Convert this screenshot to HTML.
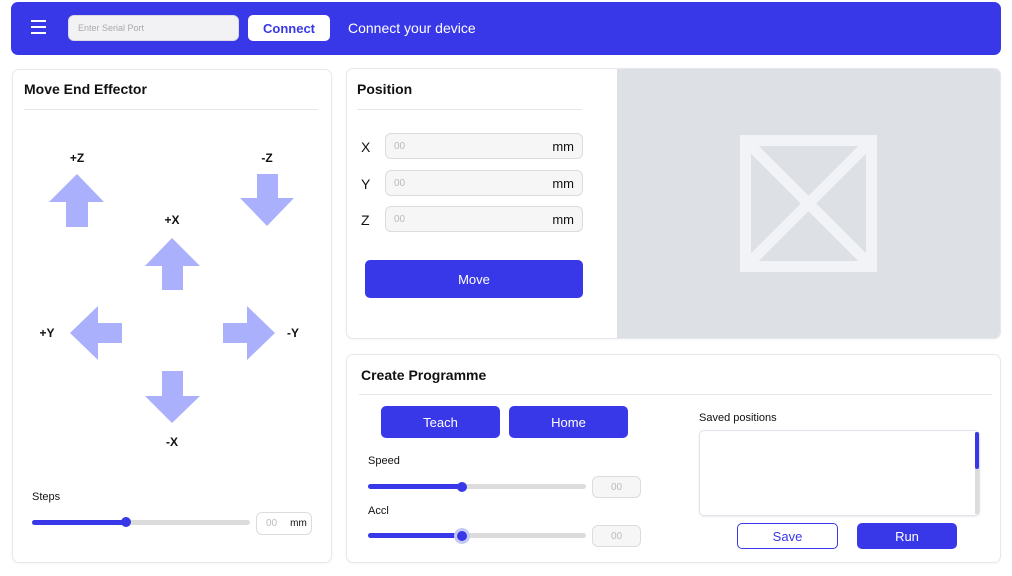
<!DOCTYPE html>
<html><head><meta charset="utf-8"><style>
*{box-sizing:border-box;margin:0;padding:0}
body{width:1012px;height:576px;background:#fff;font-family:"Liberation Sans",sans-serif;position:relative;overflow:hidden;color:#111}
.a{position:absolute}
.card{position:absolute;background:#fff;border:1px solid #e6e8ee;border-radius:7px;box-shadow:0 1px 2px rgba(0,0,0,.04)}
.hdr{left:11px;top:2px;width:990px;height:53px;background:#3838e8;border-radius:7px}
.t{font-size:14px;font-weight:bold;color:#111}
.hr{position:absolute;height:1px;background:#e4e6ea}
.btn{position:absolute;background:#3838e8;color:#fff;border-radius:5px;font-size:13px;display:flex;align-items:center;justify-content:center}
.inp{position:absolute;background:#f6f6f7;border:1px solid #dcdcdf;border-radius:6px;font-size:10px;color:#bbb;display:flex;align-items:center}
.lbl{position:absolute;font-size:11px;color:#111}
.track{position:absolute;height:5px;background:#dcdcdc;border-radius:3px}
.fill{position:absolute;height:5px;background:#3838e8;border-radius:3px}
.knob{position:absolute;width:10px;height:10px;border-radius:50%;background:#3838e8}
.al{position:absolute;font-size:12px;font-weight:bold;transform:translate(-50%,-50%)}
</style></head><body>
<div class="a hdr"></div>
<div class="a" style="left:31px;top:20px;width:15px;height:2px;background:#fff;box-shadow:0 6px 0 #fff,0 12px 0 #fff"></div>
<div class="inp" style="left:68px;top:15px;width:171px;height:26px;background:#f2f2f4;padding-left:9px;font-size:9px;color:#aaa">Enter Serial Port</div>
<div class="a" style="left:248px;top:15px;width:82px;height:26px;background:#fff;border-radius:5px;color:#3838e8;font-size:13px;font-weight:bold;display:flex;align-items:center;justify-content:center">Connect</div>
<div class="a" style="left:348px;top:20px;color:#fff;font-size:14px">Connect your device</div>

<!-- Left card -->
<div class="card" style="left:12px;top:69px;width:320px;height:494px"></div>
<div class="a t" style="left:24px;top:81px">Move End Effector</div>
<div class="hr" style="left:24px;top:109px;width:294px"></div>
<svg class="a" style="left:0;top:0" width="340" height="460">
<g fill="#aab0fb">
<polygon points="77,174 104,202 88,202 88,227 66,227 66,202 49,202"/>
<polygon points="267,226 294,198 278,198 278,174 257,174 257,198 240,198"/>
<polygon points="172,238 200,266 183,266 183,290 162,290 162,266 145,266"/>
<polygon points="70,333 98,306 98,323 122,323 122,343 98,343 98,360"/>
<polygon points="275,333 247,306 247,323 223,323 223,343 247,343 247,360"/>
<polygon points="172,423 200,396 183,396 183,371 162,371 162,396 145,396"/>
</g></svg>
<div class="al" style="left:77px;top:158px">+Z</div>
<div class="al" style="left:267px;top:158px">-Z</div>
<div class="al" style="left:172px;top:220px">+X</div>
<div class="al" style="left:47px;top:333px">+Y</div>
<div class="al" style="left:293px;top:333px">-Y</div>
<div class="al" style="left:172px;top:442px">-X</div>
<div class="lbl" style="left:32px;top:491px">Steps</div>
<div class="track" style="left:32px;top:520px;width:218px"></div>
<div class="fill" style="left:32px;top:520px;width:94px"></div>
<div class="knob" style="left:121px;top:517px"></div>
<div class="inp" style="left:256px;top:512px;width:56px;height:23px;background:#fff;padding-left:9px">00<span style="color:#111;margin-left:13px;font-size:10px">mm</span></div>

<!-- Position card -->
<div class="card" style="left:346px;top:68px;width:655px;height:271px;overflow:hidden"><div class="a" style="left:270px;top:0;width:385px;height:271px;background:#dde0e5"></div></div>
<div class="a" style="left:740px;top:135px;width:137px;height:137px;border:11px solid #f1f3f7"></div>
<svg class="a" style="left:740px;top:135px" width="137" height="137"><path d="M11 11L126 126M126 11L11 126" stroke="#f1f3f7" stroke-width="11"/></svg>
<div class="a t" style="left:357px;top:81px">Position</div>
<div class="hr" style="left:357px;top:109px;width:225px"></div>
<div class="a" style="left:361px;top:139px;font-size:14px">X</div>
<div class="a" style="left:361px;top:176px;font-size:14px">Y</div>
<div class="a" style="left:361px;top:212px;font-size:14px">Z</div>
<div class="inp" style="left:385px;top:133px;width:198px;height:26px;padding:0 8px;justify-content:space-between">00<span style="color:#111;font-size:13px">mm</span></div>
<div class="inp" style="left:385px;top:170px;width:198px;height:26px;padding:0 8px;justify-content:space-between">00<span style="color:#111;font-size:13px">mm</span></div>
<div class="inp" style="left:385px;top:206px;width:198px;height:26px;padding:0 8px;justify-content:space-between">00<span style="color:#111;font-size:13px">mm</span></div>
<div class="btn" style="left:365px;top:260px;width:218px;height:38px">Move</div>

<!-- Programme card -->
<div class="card" style="left:346px;top:354px;width:655px;height:209px"></div>
<div class="a t" style="left:361px;top:367px">Create Programme</div>
<div class="hr" style="left:359px;top:394px;width:633px"></div>
<div class="btn" style="left:381px;top:406px;width:119px;height:32px">Teach</div>
<div class="btn" style="left:509px;top:406px;width:119px;height:32px">Home</div>
<div class="lbl" style="left:368px;top:455px">Speed</div>
<div class="track" style="left:368px;top:484px;width:218px"></div>
<div class="fill" style="left:368px;top:484px;width:94px"></div>
<div class="knob" style="left:457px;top:482px"></div>
<div class="inp" style="left:592px;top:476px;width:49px;height:22px;justify-content:center">00</div>
<div class="lbl" style="left:368px;top:505px">Accl</div>
<div class="track" style="left:368px;top:533px;width:218px"></div>
<div class="fill" style="left:368px;top:533px;width:94px"></div>
<div class="knob" style="left:457px;top:531px;box-shadow:0 0 0 3px #c5cbf7"></div>
<div class="inp" style="left:592px;top:525px;width:49px;height:22px;justify-content:center">00</div>
<div class="lbl" style="left:699px;top:412px">Saved positions</div>
<div class="a" style="left:699px;top:430px;width:281px;height:86px;border:1px solid #e2e3ea;border-radius:5px;box-shadow:0 1px 2px rgba(0,0,0,.08)"></div>
<div class="a" style="left:975px;top:432px;width:4px;height:82px;background:#dcdcdc"></div>
<div class="a" style="left:975px;top:432px;width:4px;height:37px;background:#3838e8;border-radius:2px"></div>
<div class="a" style="left:737px;top:523px;width:101px;height:26px;border:1px solid #3838e8;border-radius:5px;color:#3838e8;font-size:13px;display:flex;align-items:center;justify-content:center">Save</div>
<div class="btn" style="left:857px;top:523px;width:100px;height:26px">Run</div>
</body></html>
